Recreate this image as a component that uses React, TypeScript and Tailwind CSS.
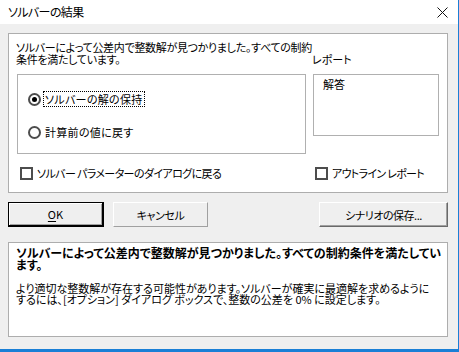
import React from "react";

const font = "font-['Noto_Sans_CJK_JP','Noto_Sans',sans-serif] [font-feature-settings:'palt']";

function Radio({ checked, label, focus }: { checked?: boolean; label: string; focus?: boolean }) {
  return (
    <div className="flex items-center h-[16px]">
      <div className="w-[13px] h-[13px] rounded-full border-2 border-[#4d4d4d] bg-white flex items-center justify-center shrink-0">
        {checked && <div className="w-[5px] h-[5px] rounded-full bg-black" />}
      </div>
      <div
        className={
          "ml-[2px] px-[1px] h-[16px] flex items-center whitespace-nowrap tracking-[0.3px] " +
          (focus ? "border border-dotted border-black" : "border border-transparent")
        }
      >
        {label}
      </div>
    </div>
  );
}

function Check({ label, track }: { label: string; track: string }) {
  return (
    <div className="flex items-center h-[14px]">
      <div className="w-[13px] h-[13px] border-2 border-[#4d4d4d] bg-white shrink-0" />
      <div className={"ml-[4px] whitespace-nowrap " + track}>{label}</div>
    </div>
  );
}

export default function App() {
  return (
    <div className={"relative w-[459px] h-[352px] bg-[#efefef] text-black text-[11px] leading-[12px] overflow-hidden " + font}>
      {/* title bar */}
      <div className="h-[24px] bg-white flex items-center justify-between pl-[8px] pr-[10px]">
        <span className="text-[12px] tracking-[-0.6px]">ソルバーの結果</span>
        <svg width="11" height="11" viewBox="0 0 11 11" className="mr-[1px]">
          <path d="M0.5 0.5 L10.5 10.5 M10.5 0.5 L0.5 10.5" stroke="#111" strokeWidth="1" />
        </svg>
      </div>

      <div className="pl-[8px] pr-[11px] pt-[9px]">
        {/* top panel */}
        <div className="h-[160px] bg-white border border-[#adadad] pl-[8px] pt-[7px]">
          <div className="flex">
            <div className="w-[289px]">
              <div className="whitespace-nowrap -ml-[1px] tracking-[-0.3px]">
                <div className="h-[12px]">ソルバーによって公差内で整数解が見つかりました。すべての制約</div>
                <div className="h-[12px]">条件を満たしています。</div>
              </div>
              <div className="mt-[9px] h-[80px] border border-[#b0b0b0] pl-[10px] pt-[16px]">
                <Radio checked focus label="ソルバーの解の保持" />
                <div className="mt-[17px]">
                  <Radio label="計算前の値に戻す" />
                </div>
              </div>
            </div>
            <div className="ml-[7px] w-[126px]">
              <div className="h-[12px]" />
              <div className="h-[12px] -ml-[1px]">レポート</div>
              <div className="mt-[9px] h-[62px] border border-[#b0b0b0] pl-[9px] pt-[3px]">解答</div>
            </div>
          </div>
          <div className="flex mt-[12px]">
            <div className="w-[298px] pl-[3px]">
              <Check label="ソルバー パラメーターのダイアログに戻る" track="tracking-[-0.6px]" />
            </div>
            <div>
              <Check label="アウトライン レポート" track="tracking-[-0.7px]" />
            </div>
          </div>
        </div>

        {/* buttons */}
        <div className="flex mt-[9px] h-[25px]">
          <button className="w-[96px] h-[25px] border border-black border-r-2 border-b-2 bg-[#efefef] flex items-center justify-center shadow-[inset_1px_1px_0_#fff,inset_-1px_-1px_0_#a0a0a0]">
            <span>
              <span className="underline underline-offset-2">O</span>K
            </span>
          </button>
          <button className="ml-[9px] w-[95px] h-[25px] bg-[#efefef] border border-t-white border-l-white border-r-[#a0a0a0] border-b-[#a0a0a0] flex items-center justify-center tracking-[-0.4px]">
            キャンセル
          </button>
          <div className="flex-1" />
          <button className="w-[129px] h-[25px] bg-[#efefef] border border-t-white border-l-white border-r-[#696969] border-b-[#696969] shadow-[inset_-1px_-1px_0_#a0a0a0] flex items-center justify-center tracking-[-0.5px]">
            シナリオの保存...
          </button>
        </div>

        {/* bottom panel */}
        <div className="mt-[15px] h-[95px] bg-white border border-[#adadad] pl-[7px] pt-[4px]">
          <div className="font-bold whitespace-nowrap text-[12px]">
            <div className="h-[12px]">ソルバーによって公差内で整数解が見つかりました。すべての制約条件を満たしてい</div>
            <div className="h-[12px]">ます。</div>
          </div>
          <div className="mt-[12px] whitespace-nowrap leading-[11px]">
            <div className="h-[11px]">より適切な整数解が存在する可能性があります。ソルバーが確実に最適解を求めるように</div>
            <div className="h-[11px]">するには、[オプション] ダイアログ ボックスで、整数の公差を 0% に設定します。</div>
          </div>
        </div>
      </div>

      {/* window border */}
      <div className="absolute right-0 top-0 w-[1px] h-full bg-[#1a7fd6]" />
      <div className="absolute left-0 bottom-0 w-full h-[3px] bg-[#1a7fd6]" />
    </div>
  );
}
